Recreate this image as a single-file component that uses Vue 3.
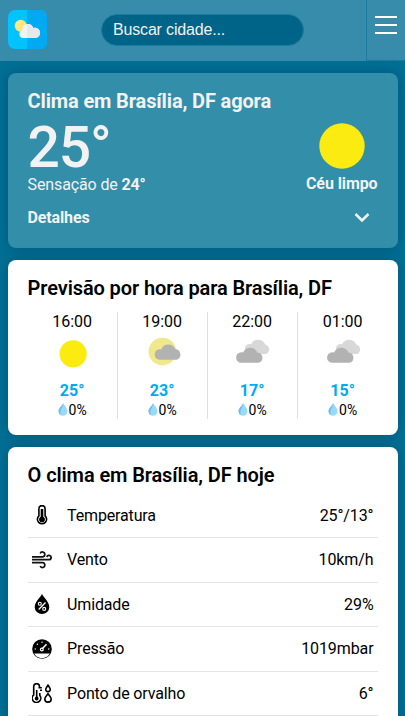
<script setup>
const hours = [
  { time: '16:00', icon: 'sun', temp: '25°', rain: '0%' },
  { time: '19:00', icon: 'partly', temp: '23°', rain: '0%' },
  { time: '22:00', icon: 'cloudy', temp: '17°', rain: '0%' },
  { time: '01:00', icon: 'cloudy', temp: '15°', rain: '0%' },
]

const details = [
  { icon: 'thermometer', label: 'Temperatura', value: '25°/13°' },
  { icon: 'wind', label: 'Vento', value: '10km/h' },
  { icon: 'humidity', label: 'Umidade', value: '29%' },
  { icon: 'pressure', label: 'Pressão', value: '1019mbar' },
  { icon: 'dew', label: 'Ponto de orvalho', value: '6°' },
]
</script>

<template>
  <div class="page">
    <header class="header">
      <div class="logo-area">
        <svg class="logo" viewBox="0 0 39 39">
          <rect width="39" height="39" rx="7" fill="#00c3ff" />
          <path d="M19 0h13a7 7 0 0 1 7 7v25a7 7 0 0 1-7 7H19z" fill="#00aaf2" />
          <circle cx="12.7" cy="15.8" r="6" fill="#ffe67d" />
          <path d="M15 28a4 4 0 0 1-.8-7.8C14.500 16.500 16.500 14 19.800 14c2.800 0 4.600 1.500 5.300 4 4-.8 7 1.600 7 5a5 5 0 0 1-4.800 5z" fill="#f1f2f5" />
          <path d="M19 14c3.500-.3 5.400 1.300 6.100 4 4-.8 7 1.600 7 5a5 5 0 0 1-4.800 5H19z" fill="#e6e8ed" />
        </svg>
      </div>
      <div class="search">Buscar cidade...</div>
      <button class="menu" aria-label="Menu">
        <span class="bar"></span>
        <span class="bar"></span>
        <span class="bar"></span>
      </button>
    </header>

    <main class="content">
      <section class="card now">
        <h2 class="title now-title">Clima em Brasília, DF agora</h2>
        <div class="now-body">
          <div>
            <div class="degrees">25°</div>
            <div class="feels">Sensação de <b>24°</b></div>
          </div>
          <div class="condition">
            <svg class="big-sun" viewBox="0 0 46 46"><circle cx="23" cy="23" r="22.700" fill="#fceb10" /></svg>
            <b>Céu limpo</b>
          </div>
        </div>
        <div class="more">
          <b>Detalhes</b>
          <svg class="chevron" viewBox="0 0 16 10"><path d="M1.500 1 8 7.400l6.500-6.400" fill="none" stroke="#f2f2f2" stroke-width="2.500" /></svg>
        </div>
      </section>

      <section class="card hourly">
        <h2 class="title">Previsão por hora para Brasília, DF</h2>
        <div class="hours">
          <div v-for="h in hours" :key="h.time" class="hour">
            <div class="time">{{ h.time }}</div>
            <svg class="weather" viewBox="0 0 40 40">
              <circle v-if="h.icon === 'sun'" cx="21.200" cy="22.500" r="14.700" fill="#fceb10" />
              <template v-else-if="h.icon === 'partly'">
                <circle cx="20.500" cy="20" r="15" fill="#f0e88a" />
                <path d="M17.500 28.800a5.700 5.700 0 0 1-.7-11.300c1-.1 1.700.1 2.400.4a8.200 8.200 0 0 1 15.300-.2 5.700 5.700 0 0 1 1.500 11.100z" fill="#b2b2b2" />
              </template>
              <template v-else>
                <path d="M18 22.800a5.700 5.700 0 0 1-3.200-10.300c1.200-.8 2.700-.9 4.200-.3a8.300 8.300 0 0 1 15.300.1 5.700 5.700 0 0 1 1.200 10.500z" fill="#d8d8d8" />
                <path d="M8.500 32.200a5.700 5.700 0 0 1 0-11.400c.7 0 1.200.1 1.900.4a8.400 8.400 0 0 1 15.400-.2 5.700 5.700 0 0 1 1.200 11.200z" fill="#b2b2b2" />
              </template>
            </svg>
            <div class="temp">{{ h.temp }}</div>
            <div class="rain">
              <svg class="drop" viewBox="0 0 10 13">
                <path d="M5.300.3C7 3.300 9.500 5.600 9.500 8.300a4.500 4.500 0 0 1-9 0C.5 5.600 3.600 3.300 5.300.3z" fill="#99dafa" />
                <path d="M5.300.3C3.600 3.300.5 5.600.5 8.300a4.500 4.500 0 0 0 2.500 4C.8 7.800 5 5 5.300.3z" fill="#70bfe7" />
              </svg>
              <span>{{ h.rain }}</span>
            </div>
          </div>
        </div>
      </section>

      <section class="card today">
        <h2 class="title">O clima em Brasília, DF hoje</h2>
        <div v-for="d in details" :key="d.label" class="row">
          <svg class="row-icon" viewBox="0 0 20 20">
            <g v-if="d.icon === 'thermometer'" fill="none" stroke="#000">
              <path d="M6.900 10.800V3.700a3.100 3.100 0 0 1 6.200 0v7.100a4.600 4.600 0 1 1-6.200 0z" stroke-width="1.600" fill="#fff" />
              <path d="M10 4v9" stroke-width="2.600" />
              <circle cx="10" cy="14.400" r="2.500" fill="#000" />
            </g>
            <g v-else-if="d.icon === 'wind'" fill="none" stroke="#111" stroke-width="1.700">
              <path d="M0 6.800h10.500a2.400 2.400 0 1 0-2.300-3.300M0 9.700h17a2.200 2.200 0 1 0-2.200-2.700M0 12.700h10.500a2.400 2.400 0 1 1-2.300 3.300" />
            </g>
            <g v-else-if="d.icon === 'humidity'">
              <path d="M10 0c2 3.800 7.300 8 7.300 13.200a7.300 6.800 0 0 1-14.600 0C2.700 8 8 3.800 10 0z" fill="#000" />
              <path d="m13.500 8.500-6.800 7" stroke="#fff" stroke-width="1.300" />
              <circle cx="7.800" cy="9.800" r="1.500" fill="none" stroke="#fff" stroke-width="1.100" />
              <circle cx="12.200" cy="14.900" r="1.500" fill="none" stroke="#fff" stroke-width="1.100" />
            </g>
            <g v-else-if="d.icon === 'pressure'">
              <circle cx="10" cy="10" r="9.800" fill="#000" />
              <path d="M2.200 14.600h15.600a8.900 8.900 0 0 1-15.600 0z" fill="#fff" />
              <path d="m10.500 9.500 4-4.200" stroke="#fff" stroke-width="1.500" />
              <circle cx="9.800" cy="10.500" r="1.400" fill="none" stroke="#fff" stroke-width="1.200" />
              <g fill="#fff">
                <circle cx="3.200" cy="10" r=".7" /><circle cx="5.400" cy="5.300" r=".7" />
                <circle cx="10" cy="3.200" r=".7" /><circle cx="16.800" cy="10" r=".7" />
              </g>
            </g>
            <g v-else fill="none" stroke="#000" stroke-width="1.600">
              <path d="M7.500 4V3.500a2.900 2.900 0 0 0-5.800 0v8.400a4.300 4.300 0 1 0 6.100.5V10M6.500 4.700h3.300M8 7.200h2" />
              <path d="M4.700 7v7.500" />
              <circle cx="4.700" cy="15.500" r="1.100" fill="#000" />
              <path d="M16 2.200c-1.300 1.900-2.300 2.900-2.300 4.100a2.300 2.300 0 0 0 4.600 0c0-1.200-1-2.200-2.300-4.100zM16 10.800c-1.600 2.200-3.200 3.500-3.200 5.100a3.200 3.200 0 0 0 6.400 0c0-1.600-1.600-2.900-3.200-5.100z" />
            </g>
          </svg>
          <span class="label">{{ d.label }}</span>
          <span class="value">{{ d.value }}</span>
        </div>
      </section>
    </main>
  </div>
</template>

<style>
body {
  background: #007095;
  overflow: hidden;
}
</style>

<style scoped>
.page {
  height: 716px;
  overflow: hidden;
  font-family: Roboto, sans-serif;
  font-size: 16px;
  color: #000;
  background: #007095;
}
.header {
  display: flex;
  align-items: center;
  height: 61px;
  background: #388cab;
}
.logo-area {
  width: 93px;
  padding-left: 8px;
  box-sizing: content-box;
}
.logo {
  display: block;
  width: 39px;
  height: 39px;
  margin-bottom: 2px;
}
.search {
  box-sizing: border-box;
  width: 203px;
  height: 32px;
  margin-bottom: 2px;
  padding-left: 11px;
  border: 1px solid #1a7c9f;
  border-radius: 16px;
  background: #006488;
  color: #f2f2f2;
  font: 16px/30px "Liberation Sans", sans-serif;
  letter-spacing: -0.17px;
}
.menu {
  box-sizing: border-box;
  display: flex;
  flex-direction: column;
  align-items: flex-start;
  gap: 6px;
  width: 39px;
  height: 61px;
  margin-left: auto;
  padding: 16px 0 0 8px;
  border: 0 solid #1a7c9f;
  border-width: 0 0 1px 1px;
  background: none;
}
.bar {
  width: 21.500px;
  height: 2px;
  background: #fff;
}
.content {
  display: flex;
  flex-direction: column;
  gap: 12px;
  padding: 12px 7.500px 0 8px;
}
.card {
  box-sizing: border-box;
  flex: none;
  padding: 16px 20px 0 19.600px;
  border-radius: 8px;
  background: #fff;
  box-shadow: 0 0 14px rgba(0, 50, 80, 0.4);
}
.title {
  margin: 0;
  font-size: 20px;
  font-weight: 600;
  line-height: 24px;
  letter-spacing: -0.11px;
}
.now {
  height: 174.500px;
  background: #338eaa;
  color: #f2f2f2;
}
.now-title {
  font-weight: 700;
  letter-spacing: -0.14px;
}
.now-body {
  display: flex;
  justify-content: space-between;
}
.degrees {
  height: 62px;
  font-size: 57px;
  font-weight: 500;
  line-height: 70px;
  letter-spacing: -1.200px;
}
.feels {
  line-height: 19px;
  letter-spacing: -0.13px;
}
.condition {
  display: flex;
  flex-direction: column;
  align-items: center;
  padding-top: 10px;
  line-height: 19px;
  letter-spacing: -0.1px;
}
.big-sun {
  width: 46px;
  height: 46px;
  margin-bottom: 5px;
}
.more {
  display: flex;
  justify-content: space-between;
  align-items: center;
  margin-top: 14px;
  padding-right: 7.500px;
  line-height: 19px;
  letter-spacing: -0.15px;
}
.chevron {
  width: 16px;
  height: 10px;
}
.hourly {
  height: 175px;
}
.hours {
  display: grid;
  grid-template-columns: repeat(4, 90px);
  margin-top: 12.500px;
}
.hour {
  box-sizing: border-box;
  display: flex;
  flex-direction: column;
  align-items: center;
  height: 107px;
  border-right: 1px solid #dedede;
}
.hour:last-child {
  border-right: 0;
}
.time {
  line-height: 19px;
}
.weather {
  width: 40px;
  height: 40px;
  margin-top: 1.500px;
}
.temp {
  margin-top: 11px;
  color: #00aaf2;
  font-weight: 700;
  line-height: 19px;
}
.rain {
  display: flex;
  align-items: center;
  height: 20px;
  margin-top: 0.500px;
  font-size: 14px;
  line-height: 18px;
}
.rain span {
  padding-top: 1px;
}
.drop {
  width: 10px;
  height: 13px;
  margin-right: 1px;
}
.today {
  height: 300px;
}
.row {
  box-sizing: border-box;
  display: flex;
  align-items: center;
  height: 44.500px;
  padding: 0 4px 0 4px;
  border-bottom: 1px solid #e4e4e4;
}
.title + .row {
  margin-top: 7px;
}
.row-icon {
  width: 20px;
  height: 20px;
  margin-right: 15.500px;
}
.label {
  letter-spacing: -0.15px;
}
.value {
  margin-left: auto;
  letter-spacing: -0.1px;
}
</style>
